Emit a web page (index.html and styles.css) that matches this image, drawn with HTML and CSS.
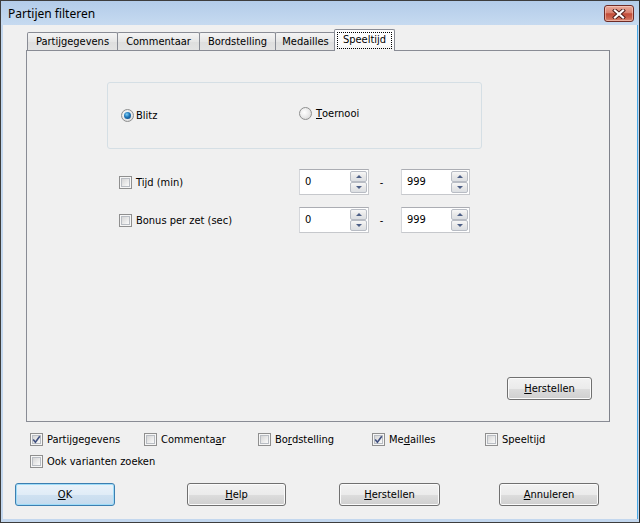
FILE: index.html
```html
<!DOCTYPE html>
<html>
<head>
<meta charset="utf-8">
<title>Partijen filteren</title>
<link rel="stylesheet" href="styles.css">
</head>
<body>
<div class="window">
  <div class="titlebar">
    <span class="title">Partijen filteren</span>
    <span class="close">
      <svg width="14" height="10" viewBox="0 0 14 10">
        <path d="M3 1.5 L11 8.5 M11 1.5 L3 8.5" stroke="#4a1a16" stroke-width="4" stroke-linecap="square"/>
        <path d="M3 1.5 L11 8.5 M11 1.5 L3 8.5" stroke="#ffffff" stroke-width="2.2" stroke-linecap="square"/>
      </svg>
    </span>
  </div>
  <div class="client">
    <div class="tabs">
      <div class="tab">Partijgegevens</div>
      <div class="tab">Commentaar</div>
      <div class="tab">Bordstelling</div>
      <div class="tab">Medailles</div>
      <div class="tab active"><span class="focus">Speeltijd</span></div>
    </div>
    <div class="panel">
      <div class="group">
        <label class="opt blitz"><span class="rb checked"></span>Blitz</label>
        <label class="opt toernooi"><span class="rb"></span><u>T</u>oernooi</label>
      </div>
      <div class="rows">
        <div class="row">
          <label class="opt row-label"><span class="cb"></span>Tijd (min)</label>
          <div class="spin"><span class="val">0</span><span class="arrows"><span class="arrow up"></span><span class="arrow down"></span></span></div>
          <span class="dash">-</span>
          <div class="spin"><span class="val">999</span><span class="arrows"><span class="arrow up"></span><span class="arrow down"></span></span></div>
        </div>
        <div class="row">
          <label class="opt row-label"><span class="cb"></span>Bonus per zet (sec)</label>
          <div class="spin"><span class="val">0</span><span class="arrows"><span class="arrow up"></span><span class="arrow down"></span></span></div>
          <span class="dash">-</span>
          <div class="spin"><span class="val">999</span><span class="arrows"><span class="arrow up"></span><span class="arrow down"></span></span></div>
        </div>
      </div>
      <div class="panel-foot">
        <span class="btn btn-reset"><u>H</u>erstellen</span>
      </div>
    </div>
    <div class="optrow">
      <label class="opt"><span class="cb checked"><svg width="11" height="11" viewBox="0 0 11 11"><path d="M2.2 5.6 L4.4 8.3 L8.8 2.2" fill="none" stroke="#3f4f7f" stroke-width="1.6"/></svg></span>Partijgegevens</label>
      <label class="opt"><span class="cb"></span>Commenta<u>a</u>r</label>
      <label class="opt"><span class="cb"></span>Bo<u>r</u>dstelling</label>
      <label class="opt"><span class="cb checked"><svg width="11" height="11" viewBox="0 0 11 11"><path d="M2.2 5.6 L4.4 8.3 L8.8 2.2" fill="none" stroke="#3f4f7f" stroke-width="1.6"/></svg></span>Me<u>d</u>ailles</label>
      <label class="opt"><span class="cb"></span>Speeltijd</label>
    </div>
    <div class="optrow2">
      <label class="opt"><span class="cb"></span>Ook varianten zoeken</label>
    </div>
    <div class="buttons">
      <span class="btn btn-default"><u>O</u>K</span>
      <span class="btn btn-help"><u>H</u>elp</span>
      <span class="btn btn-restore"><u>H</u>erstellen</span>
      <span class="btn btn-cancel"><u>A</u>nnuleren</span>
    </div>
  </div>
</div>
</body>
</html>
```
FILE: styles.css
```css
* { box-sizing: border-box; }
html, body { margin: 0; padding: 0; }
body {
  width: 640px;
  height: 523px;
  background: #f0f0f0;
  font-family: "DejaVu Sans Condensed", "DejaVu Sans", sans-serif;
  font-size: 11px;
  color: #000;
  overflow: hidden;
}
u { text-decoration: underline; text-underline-offset: 1px; }

.window {
  width: 640px;
  height: 523px;
  border: 1px solid #3d3d3d;
  border-right-color: #2b2b2b;
  display: flex;
  flex-direction: column;
  background: #c3d7ee;
}

.titlebar {
  height: 24px;
  flex: none;
  display: flex;
  align-items: center;
  justify-content: space-between;
  padding: 0 5px 0 7px;
  background: linear-gradient(#b3cce9, #c6daf0);
}
.title {
  font-family: "Noto Sans", "Open Sans", sans-serif;
  font-size: 12px;
  color: #000;
  margin-top: 1px;
}
.close {
  width: 30px;
  height: 17px;
  margin-top: 1px;
  border: 1px solid #6e2b26;
  border-radius: 3px;
  background: linear-gradient(#e9aa9b 0%, #d98270 45%, #c24b37 52%, #cc6550 80%, #d98a74 100%);
  box-shadow: inset 0 0 0 1px rgba(255, 220, 210, 0.5);
  display: flex;
  align-items: center;
  justify-content: center;
}

.client {
  flex: 1;
  margin: 0 2px 3px 2px;
  background: #f0f0f0;
  display: flex;
  flex-direction: column;
  box-shadow: 1px 0 0 #49a9e6;
}

/* tabs */
.tabs {
  display: flex;
  align-items: flex-end;
  height: 21px;
  margin: 4px 0 0 24px;
  position: relative;
  z-index: 1;
}
.tab {
  height: 18px;
  border: 1px solid #898c95;
  border-bottom: none;
  border-radius: 2px 2px 0 0;
  background: linear-gradient(#f4f4f4, #e6e6e6 50%, #dedede 51%, #e3e3e3);
  margin-right: -1px;
  display: flex;
  align-items: center;
  justify-content: center;
  white-space: nowrap;
}
.tab:nth-child(1) { width: 91px; }
.tab:nth-child(2) { width: 83px; }
.tab:nth-child(3) { width: 77px; }
.tab:nth-child(4) { width: 61px; }
.tab.active {
  width: 61px;
  height: 22px;
  margin-left: -1px;
  margin-bottom: -1px;
  background: linear-gradient(#ffffff, #fbfbfb 70%, #f0f0f0);
  align-items: flex-start;
  padding-top: 2px;
}
.focus {
  display: block;
  width: 55px;
  height: 17px;
  border: 1px dotted #000;
  text-align: center;
  line-height: 14px;
}

/* panel */
.panel {
  margin-left: 23px;
  width: 584px;
  height: 372px;
  border: 1px solid #898c95;
  border-right-color: #7f828b;
  background: #f0f0f0;
  padding: 31px 17px 21px 80px;
  display: flex;
  flex-direction: column;
}
.group {
  width: 375px;
  height: 67px;
  border: 1px solid #d5dfe5;
  border-radius: 3px;
  display: flex;
  align-items: center;
  padding-left: 13px;
}
.opt {
  display: flex;
  align-items: center;
  white-space: nowrap;
}
.blitz { width: 178px; margin-bottom: 1px; }
.blitz .rb { margin-right: 2px; }
.toernooi { margin-bottom: 5px; }
.toernooi .rb { margin-right: 4px; }

.rb {
  width: 13px;
  height: 13px;
  border-radius: 50%;
  border: 1px solid #8e8f8f;
  background: radial-gradient(circle at 40% 40%, #ffffff 0%, #ececec 45%, #cfcfcf 100%);
  display: flex;
  align-items: center;
  justify-content: center;
  flex: none;
}
.rb.checked::after {
  content: "";
  width: 7px;
  height: 7px;
  border-radius: 50%;
  background: radial-gradient(circle at 40% 35%, #7fd0f4 0%, #1f75b8 45%, #0c3f70 100%);
}

.cb {
  width: 13px;
  height: 13px;
  border: 1px solid #8f8f8f;
  background: #f6f6f6;
  position: relative;
  flex: none;
  margin-right: 4px;
}
.cb::before {
  content: "";
  position: absolute;
  left: 1px; top: 1px; right: 1px; bottom: 1px;
  border: 1px solid #b9bdc3;
  background: linear-gradient(135deg, #d6d6d6, #f3f3f3 80%, #fafafa);
}
.cb svg { position: absolute; left: 0; top: 0; }

.rows {
  margin-top: 20px;
  padding-left: 12px;
  display: flex;
  flex-direction: column;
  gap: 12px;
}
.row {
  display: flex;
  align-items: center;
  height: 26px;
}
.row-label { width: 180px; }

.spin {
  width: 70px;
  height: 26px;
  border: 1px solid #c6c8cc;
  border-top-color: #abadb3;
  border-left-color: #d5d7db;
  background: #fff;
  display: flex;
  align-items: center;
  padding: 0 1px 0 5px;
}
.spin + .dash + .spin { width: 69px; }
.val { flex: 1; padding-bottom: 1px; }
.arrows {
  width: 17px;
  height: 22px;
  display: flex;
  flex-direction: column;
}
.arrow {
  flex: 1;
  border: 1px solid #b8bcc4;
  border-radius: 2px;
  background: linear-gradient(#f7f7f7, #e8e8e8 50%, #dcdfe3);
  display: flex;
  align-items: center;
  justify-content: center;
}
.arrow.up::after {
  content: "";
  border-left: 3px solid transparent;
  border-right: 3px solid transparent;
  border-bottom: 3px solid #4d5f86;
}
.arrow.down::after {
  content: "";
  border-left: 3px solid transparent;
  border-right: 3px solid transparent;
  border-top: 3px solid #4d5f86;
}
.dash {
  width: 32px;
  text-align: center;
  padding-right: 7px;
}

.panel-foot {
  margin-top: auto;
  display: flex;
  justify-content: flex-end;
}

/* buttons */
.btn {
  height: 23px;
  border: 1px solid #707070;
  border-radius: 3px;
  background: linear-gradient(#f2f2f2 0%, #ebebeb 50%, #dddddd 51%, #cfcfcf 100%);
  box-shadow: inset 0 0 0 1px #fbfbfb;
  display: flex;
  align-items: center;
  justify-content: center;
  white-space: nowrap;
}
.btn-reset { width: 85px; }

.optrow {
  margin: 9px 0 0 27px;
  display: grid;
  grid-template-columns: 114px 114px 114px 113px 114px;
  height: 16px;
  align-items: center;
}
.optrow2 {
  margin: 6px 0 0 27px;
  height: 16px;
  display: flex;
  align-items: center;
}

.buttons {
  margin: 14px 0 0 12px;
  display: flex;
}
.buttons .btn { width: 100px; }
.btn-default {
  border-color: #3c7fb1;
  background: linear-gradient(#eaf3fa 0%, #e0ecf7 50%, #cfe1f1 51%, #c5dbee 100%);
  box-shadow: inset 0 0 0 1px #9fdcf8;
}
.buttons .btn-help { margin-left: 72px; width: 99px; }
.buttons .btn-restore { margin-left: 53px; width: 101px; }
.buttons .btn-cancel { margin-left: 59px; }
```
